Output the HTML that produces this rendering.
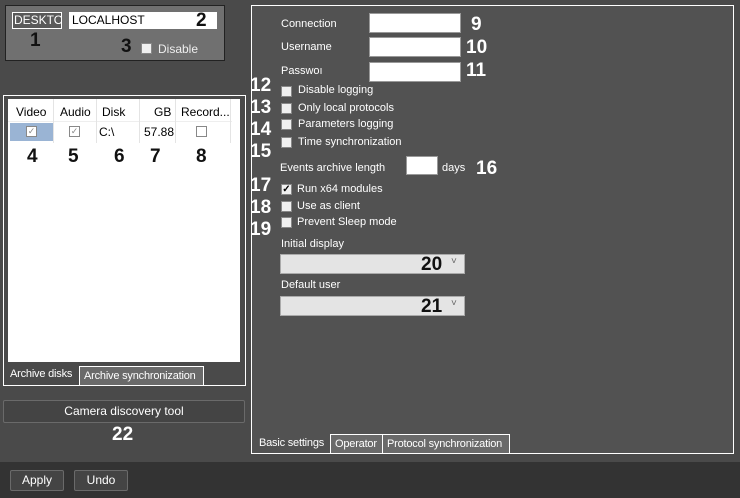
<!DOCTYPE html><html><head><style>
body{margin:0;width:740px;height:498px;background:#4a4a4a;position:relative;overflow:hidden;font-family:"Liberation Sans",sans-serif;font-size:11px;color:#fff}
.a,.n,.nb,.tab,.btn{white-space:nowrap}
.a{position:absolute}
.n{position:absolute;font-weight:bold;font-size:19px;color:#fff}
.nb{position:absolute;font-weight:bold;font-size:19px;color:#111}
.cb{position:absolute;width:11px;height:11px;background:#f0f0f0;border:1px solid #888;box-sizing:border-box}
.in{position:absolute;background:#fff;border:1px solid #999;box-sizing:border-box}
.btn{position:absolute;border:1px solid #6a6a6a;border-radius:2px;background:#444;box-sizing:border-box;text-align:center;color:#fff;font-size:12px}
.tab{position:absolute;border:1px solid #fff;background:#6a6a6a;box-sizing:border-box;font-size:11px;letter-spacing:-0.2px;padding-left:4px;line-height:18px;overflow:hidden}
</style></head><body>
<div class="a" style="left:5px;top:5px;width:220px;height:56px;background:#707070;border:1px solid #222;box-sizing:border-box"></div>
<div class="a" style="left:12px;top:12px;width:50px;height:17px;border:1px solid #fff;box-sizing:border-box;overflow:hidden;font-size:12px;line-height:15px;padding-left:1px;background:#5a5a5a">DESKTOP</div>
<div class="in" style="left:69px;top:12px;width:148px;height:17px;border:none;color:#000;font-size:12px;line-height:17px;padding-left:3px">LOCALHOST</div>
<div class="nb" style="left:196px;top:10px">2</div>
<div class="nb" style="left:30px;top:30px">1</div>
<div class="nb" style="left:121px;top:36px">3</div>
<div class="cb" style="left:141px;top:43px"></div>
<div class="a" style="left:158px;top:42px;font-size:12px;color:#eee">Disable</div>

<div class="a" style="left:3px;top:95px;width:243px;height:291px;border:1px solid #fff;box-sizing:border-box"></div>
<div class="a" style="left:8px;top:99px;width:232px;height:263px;background:#fff"></div>
<div class="a" style="left:8px;top:99px;width:224px;height:44px;color:#000;font-size:12px">
<div class="a" style="left:0;top:0;width:224px;height:22px;border-bottom:1px solid #eee"></div>
<div class="a" style="left:45px;top:0;width:1px;height:44px;background:#e4e4e4"></div>
<div class="a" style="left:88px;top:0;width:1px;height:44px;background:#e4e4e4"></div>
<div class="a" style="left:131px;top:0;width:1px;height:44px;background:#e4e4e4"></div>
<div class="a" style="left:167px;top:0;width:1px;height:44px;background:#e4e4e4"></div>
<div class="a" style="left:222px;top:0;width:1px;height:44px;background:#e4e4e4"></div>
<div class="a" style="left:8px;top:6px">Video</div><div class="a" style="left:52px;top:6px">Audio</div><div class="a" style="left:94px;top:6px">Disk</div><div class="a" style="left:146px;top:6px">GB</div><div class="a" style="left:173px;top:6px">Record...</div>
<div class="a" style="left:2px;top:24px;width:43px;height:18px;background:#9ab4d4"></div>
<div class="cb" style="left:18px;top:27px;background:#fff;color:#888;font-size:9px;line-height:9px;text-align:center">✓</div>
<div class="cb" style="left:61px;top:27px;background:#fff;color:#888;font-size:9px;line-height:9px;text-align:center">✓</div>
<div class="a" style="left:91px;top:26px">C:\</div><div class="a" style="left:136px;top:26px">57.88</div>
<div class="cb" style="left:188px;top:27px;background:#fff"></div>
</div>
<div class="nb" style="left:27px;top:146px">4</div><div class="nb" style="left:68px;top:146px">5</div><div class="nb" style="left:114px;top:146px">6</div><div class="nb" style="left:150px;top:146px">7</div><div class="nb" style="left:196px;top:146px">8</div>
<div class="a" style="left:10px;top:368px;font-size:11px;letter-spacing:-0.2px">Archive disks</div>
<div class="tab" style="left:79px;top:366px;width:125px;height:20px">Archive synchronization</div>

<div class="btn" style="left:3px;top:400px;width:242px;height:23px;line-height:21px">Camera discovery tool</div>
<div class="n" style="left:112px;top:424px">22</div>

<div class="a" style="left:251px;top:5px;width:483px;height:449px;border:1px solid #fff;box-sizing:border-box;background:#525252"></div>
<div class="a" style="left:281px;top:18px">Connection</div><div class="in" style="left:369px;top:13px;width:92px;height:20px"></div><div class="n" style="left:471px;top:14px">9</div>
<div class="a" style="left:281px;top:41px">Username</div><div class="in" style="left:369px;top:37px;width:92px;height:20px"></div><div class="n" style="left:466px;top:37px">10</div>
<div class="a" style="left:281px;top:65px">Passwoı</div><div class="in" style="left:369px;top:62px;width:92px;height:20px"></div><div class="n" style="left:466px;top:60px">11</div>
<div class="n" style="left:250px;top:75px">12</div><div class="cb" style="left:281px;top:86px"></div><div class="a" style="left:298px;top:84px">Disable logging</div>
<div class="n" style="left:250px;top:97px">13</div><div class="cb" style="left:281px;top:103px"></div><div class="a" style="left:298px;top:102px">Only local protocols</div>
<div class="n" style="left:250px;top:119px">14</div><div class="cb" style="left:281px;top:119px"></div><div class="a" style="left:298px;top:118px">Parameters logging</div>
<div class="n" style="left:250px;top:141px">15</div><div class="cb" style="left:281px;top:137px"></div><div class="a" style="left:298px;top:136px">Time synchronization</div>
<div class="a" style="left:280px;top:162px">Events archive length</div><div class="in" style="left:406px;top:156px;width:32px;height:19px"></div><div class="a" style="left:442px;top:162px">days</div><div class="n" style="left:476px;top:158px">16</div>
<div class="n" style="left:250px;top:175px">17</div><div class="cb" style="left:281px;top:184px;font-size:10px;line-height:9px;color:#000;text-align:center;font-weight:bold">✓</div><div class="a" style="left:297px;top:183px">Run x64 modules</div>
<div class="n" style="left:250px;top:197px">18</div><div class="cb" style="left:281px;top:201px"></div><div class="a" style="left:297px;top:200px">Use as client</div>
<div class="n" style="left:250px;top:219px">19</div><div class="cb" style="left:281px;top:217px"></div><div class="a" style="left:297px;top:216px">Prevent Sleep mode</div>
<div class="a" style="left:281px;top:238px">Initial display</div>
<div class="a" style="left:280px;top:254px;width:185px;height:20px;background:#e4e4e4;border:1px solid #aaa;box-sizing:border-box"></div><div class="nb" style="left:421px;top:254px">20</div><div class="a" style="left:451px;top:256px;color:#666;font-size:10px">˅</div>
<div class="a" style="left:281px;top:279px">Default user</div>
<div class="a" style="left:280px;top:296px;width:185px;height:20px;background:#e4e4e4;border:1px solid #aaa;box-sizing:border-box"></div><div class="nb" style="left:421px;top:296px">21</div><div class="a" style="left:451px;top:298px;color:#666;font-size:10px">˅</div>
<div class="a" style="left:259px;top:437px;font-size:11px;letter-spacing:-0.2px">Basic settings</div>
<div class="tab" style="left:330px;top:434px;width:53px;height:20px">Operator</div>
<div class="tab" style="left:382px;top:434px;width:128px;height:20px">Protocol synchronization</div>

<div class="a" style="left:0;top:462px;width:740px;height:36px;background:#333"></div>
<div class="btn" style="left:10px;top:470px;width:54px;height:21px;line-height:19px">Apply</div>
<div class="btn" style="left:74px;top:470px;width:54px;height:21px;line-height:19px">Undo</div>
</body></html>
